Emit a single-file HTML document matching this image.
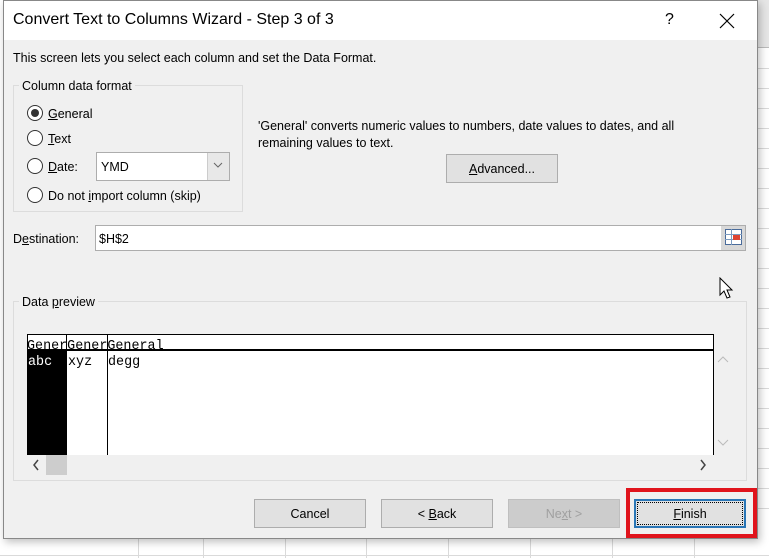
<!DOCTYPE html>
<html><head><style>
*{box-sizing:border-box;margin:0;padding:0}
body{width:769px;height:558px;overflow:hidden;background:#fff;font-family:"Liberation Sans",sans-serif;font-size:12.5px;color:#000;position:relative}
.a{position:absolute}
.t{position:absolute;white-space:nowrap;margin-top:1px}
.btn{position:absolute;height:29px;background:#e1e1e1;border:1px solid #adadad;text-align:center;line-height:29px;font-size:12.5px}
.radio{position:absolute;width:16px;height:16px;border:1px solid #333;border-radius:50%;background:#fff}
.mono{font-family:"Liberation Mono",monospace;font-size:13.4px}
</style></head><body>
<div class="a" style="left:757px;top:0;width:12px;height:48px;background:#e6e6e6;border-bottom:1px solid #bbb"></div>
<svg class="a" style="left:0;top:0" width="769" height="558">
<g stroke="#dadada" stroke-width="1">
<line x1="757" y1="68.5" x2="769" y2="68.5"/><line x1="757" y1="88.5" x2="769" y2="88.5"/><line x1="757" y1="108.5" x2="769" y2="108.5"/><line x1="757" y1="128.5" x2="769" y2="128.5"/><line x1="757" y1="148.5" x2="769" y2="148.5"/><line x1="757" y1="168.5" x2="769" y2="168.5"/><line x1="757" y1="188.5" x2="769" y2="188.5"/><line x1="757" y1="208.5" x2="769" y2="208.5"/><line x1="757" y1="228.5" x2="769" y2="228.5"/><line x1="757" y1="248.5" x2="769" y2="248.5"/><line x1="757" y1="268.5" x2="769" y2="268.5"/><line x1="757" y1="288.5" x2="769" y2="288.5"/><line x1="757" y1="308.5" x2="769" y2="308.5"/><line x1="757" y1="328.5" x2="769" y2="328.5"/><line x1="757" y1="348.5" x2="769" y2="348.5"/><line x1="757" y1="368.5" x2="769" y2="368.5"/><line x1="757" y1="388.5" x2="769" y2="388.5"/><line x1="757" y1="408.5" x2="769" y2="408.5"/><line x1="757" y1="428.5" x2="769" y2="428.5"/><line x1="757" y1="448.5" x2="769" y2="448.5"/><line x1="757" y1="468.5" x2="769" y2="468.5"/><line x1="757" y1="488.5" x2="769" y2="488.5"/><line x1="757" y1="508.5" x2="769" y2="508.5"/>
<line x1="0" y1="555.5" x2="769" y2="555.5"/>
<line x1="138.5" y1="538" x2="138.5" y2="558"/><line x1="203.5" y1="538" x2="203.5" y2="558"/><line x1="285.5" y1="538" x2="285.5" y2="558"/><line x1="366.5" y1="538" x2="366.5" y2="558"/><line x1="448.5" y1="538" x2="448.5" y2="558"/><line x1="530.5" y1="538" x2="530.5" y2="558"/><line x1="612.5" y1="538" x2="612.5" y2="558"/><line x1="694.5" y1="538" x2="694.5" y2="558"/>
</g></svg>
<div class="a" style="left:3px;top:0;width:755px;height:539px;background:#f0f0f0;border:1px solid #888;box-shadow:2px 3px 8px rgba(0,0,0,.25)"></div>
<div class="a" style="left:4px;top:1px;width:753px;height:39px;background:#fff"></div>
<div class="t" style="left:13px;top:10px;font-size:16px">Convert Text to Columns Wizard - Step 3 of 3</div>
<div class="t" style="left:665px;top:10px;font-size:16px">?</div>
<svg class="a" style="left:719px;top:13px" width="16" height="16"><path d="M1 1L15 15M15 1L1 15" stroke="#000" stroke-width="1.2"/></svg>
<div class="t" style="left:13px;top:50px">This screen lets you select each column and set the Data Format.</div>
<div class="a" style="left:13px;top:85px;width:230px;height:127px;border:1px solid #dcdcdc"></div>
<div class="t" style="left:19px;top:78px;background:#f0f0f0;padding:0 3px">Column data format</div>
<div class="radio" style="left:27px;top:105px"><div class="a" style="left:3px;top:3px;width:8px;height:8px;border-radius:50%;background:#333"></div></div>
<div class="t" style="left:48px;top:106px"><u>G</u>eneral</div>
<div class="radio" style="left:27px;top:130px"></div>
<div class="t" style="left:48px;top:131px"><u>T</u>ext</div>
<div class="radio" style="left:27px;top:158px"></div>
<div class="t" style="left:48px;top:159px"><u>D</u>ate:</div>
<div class="a" style="left:96px;top:152px;width:134px;height:29px;background:#fff;border:1px solid #adadad"></div>
<div class="t" style="left:101px;top:159px">YMD</div>
<div class="a" style="left:207px;top:153px;width:22px;height:27px;background:#e8e8e8;border-left:1px solid #ccc"></div>
<svg class="a" style="left:213px;top:161px" width="10" height="8"><path d="M1 2L5 6L9 2" stroke="#666" fill="none"/></svg>
<div class="radio" style="left:27px;top:187px"></div>
<div class="t" style="left:48px;top:188px">Do not <u>i</u>mport column (skip)</div>
<div class="t" style="left:258px;top:118px">'General' converts numeric values to numbers, date values to dates, and all</div>
<div class="t" style="left:258px;top:135px">remaining values to text.</div>
<div class="btn" style="left:446px;top:154px;width:112px"><u>A</u>dvanced...</div>
<div class="t" style="left:13px;top:231px">D<u>e</u>stination:</div>
<div class="a" style="left:95px;top:225px;width:651px;height:26px;background:#fff;border:1px solid #adadad"></div>
<div class="t" style="left:99px;top:231px">$H$2</div>
<div class="a" style="left:721px;top:226px;width:24px;height:24px;background:#d8d8d8"></div>
<svg class="a" style="left:725px;top:229px" width="17" height="17"><rect x="0.5" y="0.5" width="16" height="15" fill="#fff" stroke="#4a6b9a"/><path d="M0 5.5H17M0 10.5H17M6.5 0V16" stroke="#7a9ac0"/><rect x="8" y="6" width="7" height="5" fill="#d43"/></svg>
<div class="a" style="left:13px;top:301px;width:734px;height:180px;border:1px solid #dcdcdc"></div>
<div class="t" style="left:19px;top:294px;background:#f0f0f0;padding:0 3px">Data <u>p</u>review</div>
<div class="a" style="left:27px;top:334px;width:687px;height:121px;background:#fff;border:1px solid #000;border-bottom:none"></div>
<div class="a" style="left:27px;top:349px;width:687px;height:2px;background:#000"></div>
<div class="a" style="left:27px;top:351px;width:39px;height:104px;background:#000"></div>
<div class="a" style="left:66px;top:334px;width:1px;height:121px;background:#000"></div>
<div class="a" style="left:107px;top:334px;width:1px;height:121px;background:#000"></div>
<div class="t mono" style="left:27px;top:338px;text-decoration:underline">GenerGenerGeneral</div>
<div class="t mono" style="left:28px;top:354px;color:#fff">abc</div>
<div class="t mono" style="left:68px;top:354px">xyz</div>
<div class="t mono" style="left:108px;top:354px">degg</div>
<svg class="a" style="left:717px;top:355px" width="12" height="8"><path d="M1 7L6 2L11 7" stroke="#bbb" fill="none"/></svg>
<svg class="a" style="left:717px;top:439px" width="12" height="8"><path d="M1 1L6 6L11 1" stroke="#bbb" fill="none"/></svg>
<svg class="a" style="left:32px;top:459px" width="8" height="12"><path d="M6 1L2 6L6 11" stroke="#444" stroke-width="1.5" fill="none"/></svg>
<div class="a" style="left:46px;top:455px;width:21px;height:20px;background:#cdcdcd"></div>
<svg class="a" style="left:699px;top:459px" width="8" height="12"><path d="M2 1L6 6L2 11" stroke="#444" stroke-width="1.5" fill="none"/></svg>
<svg class="a" style="left:719px;top:277px" width="16" height="24"><path d="M1 1V18L5 14L8 21L11 20L8 13H13Z" fill="#fff" stroke="#000"/></svg>
<div class="btn" style="left:254px;top:499px;width:112px">Cancel</div>
<div class="btn" style="left:381px;top:499px;width:112px">&lt; <u>B</u>ack</div>
<div class="btn" style="left:508px;top:499px;width:112px;background:#cccccc;border-color:#bfbfbf;color:#a0a0a0">Ne<u>x</u>t &gt;</div>
<div class="a" style="left:626px;top:488px;width:131px;height:50px;border:4px solid #e0141c"></div>
<div class="btn" style="left:634px;top:499px;width:112px;border:2px solid #2a76b6;line-height:27px"><div class="a" style="left:1px;top:1px;right:1px;bottom:1px;border:1px dotted #000"></div><u>F</u>inish</div>
</body></html>
